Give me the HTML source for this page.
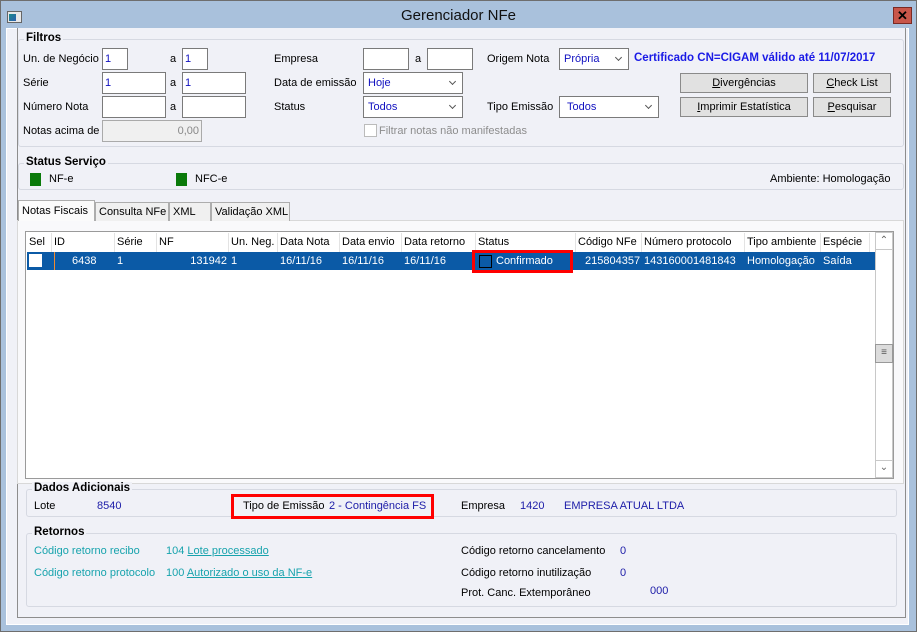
<!DOCTYPE html>
<html><head><meta charset="utf-8"><style>
*{box-sizing:border-box;margin:0;padding:0}
body{width:917px;height:632px;overflow:hidden;background:#6e6e6e;font-family:"Liberation Sans",Tahoma,sans-serif;font-size:11px;color:#000;position:relative}
div{white-space:nowrap}
.a{position:absolute}
.win{position:absolute;left:1px;top:1px;width:915px;height:630px;background:#a9c1dc}
.body{position:absolute;left:6px;top:28px;width:903px;height:597px;background:#f0f1f7;border:1px solid #fff}
.frame{position:absolute;left:17px;top:28px;width:889px;height:590px;border:1px solid #8d8d8d;border-top:none;background:#f0f1f7}
.grp{position:absolute;border:1px solid #d6d9e2;border-radius:3px}
.gt{position:absolute;font-weight:bold;background:#f0f1f7;padding:0 2px;font-size:11.5px}
.in{position:absolute;background:#fff;border:1px solid #7a7a7a;height:22px;color:#1010c0;padding:0 2px;line-height:20px}
.sel{position:absolute;background:#fff;border:1px solid #7a7a7a;height:22px;color:#1010c0;padding:0 4px;line-height:20px}
.sel:after{content:"";position:absolute;right:7px;top:6px;width:4px;height:4px;border-right:1.5px solid #555;border-bottom:1.5px solid #555;transform:rotate(45deg)}
.btn{position:absolute;background:#e1e1e1;border:1px solid #8a8a8a;height:20px;text-align:center;line-height:18px}
.tab{position:absolute;border:1px solid #adadad;border-bottom:none;background:#f0f0f0;height:19px;padding:0 3px;line-height:18px;overflow:hidden}
.hd{position:absolute;top:233px;height:19px;border-right:1px solid #e3e3e3;padding:0 2px;line-height:18px;background:#fff;overflow:hidden}
.rw{position:absolute;top:252px;height:18px;color:#fff;padding:0 2px;line-height:18px}
.teal{color:#17a3ad}
.blu{color:#1c1ca8}
</style></head><body>
<div class="win">
 <div class="a" style="left:6px;top:10px;width:15px;height:12px;background:#e8e8e8;border:1px solid #666"><div style="position:absolute;left:1px;top:2px;width:7px;height:7px;background:linear-gradient(135deg,#1a8a8a,#3060b0)"></div></div>
 <div class="a" style="left:0;width:915px;top:6px;text-align:center;font-size:15px;color:#111">Gerenciador NFe</div>
 <div class="a" style="left:892px;top:6px;width:19px;height:17px;background:#c8564a;border:1px solid #7a2a24;color:#000;font-weight:bold;font-size:13px;text-align:center;line-height:15px">✕</div>
</div>
<div class="body"></div>
<div class="frame"></div>

<div class="grp" style="left:18px;top:39px;width:886px;height:108px"></div>
<div class="gt" style="left:24px;top:32px">Filtros</div>
<div class="a" style="left:23px;top:53px">Un. de Negócio</div>
<div class="in" style="left:102px;top:48px;width:26px">1</div>
<div class="a" style="left:170px;top:53px">a</div>
<div class="in" style="left:182px;top:48px;width:26px">1</div>
<div class="a" style="left:23px;top:77px">Série</div>
<div class="in" style="left:102px;top:72px;width:64px">1</div>
<div class="a" style="left:170px;top:77px">a</div>
<div class="in" style="left:182px;top:72px;width:64px">1</div>
<div class="a" style="left:23px;top:101px">Número Nota</div>
<div class="in" style="left:102px;top:96px;width:64px"></div>
<div class="a" style="left:170px;top:101px">a</div>
<div class="in" style="left:182px;top:96px;width:64px"></div>
<div class="a" style="left:23px;top:125px">Notas acima de</div>
<div class="in" style="left:102px;top:120px;width:100px;background:#f0f0f0;border-color:#aaa;color:#888;text-align:right">0,00</div>
<div class="a" style="left:274px;top:53px">Empresa</div>
<div class="in" style="left:363px;top:48px;width:46px"></div>
<div class="a" style="left:415px;top:53px">a</div>
<div class="in" style="left:427px;top:48px;width:46px"></div>
<div class="a" style="left:274px;top:77px">Data de emissão</div>
<div class="sel" style="left:363px;top:72px;width:100px">Hoje</div>
<div class="a" style="left:274px;top:101px">Status</div>
<div class="sel" style="left:363px;top:96px;width:100px">Todos</div>
<div class="a" style="left:364px;top:124px;width:13px;height:13px;border:1px solid #bbb;background:#fff"></div>
<div class="a" style="left:379px;top:125px;color:#8d8d8d">Filtrar notas não manifestadas</div>
<div class="a" style="left:487px;top:53px">Origem Nota</div>
<div class="sel" style="left:559px;top:48px;width:70px">Própria</div>
<div class="a" style="left:634px;top:52px;font-weight:bold;color:#1a1ae6;font-size:11.5px">Certificado CN=CIGAM válido até 11/07/2017</div>
<div class="a" style="left:487px;top:101px">Tipo Emissão</div>
<div class="sel" style="left:559px;top:96px;width:100px">&nbsp;Todos</div>
<div class="btn" style="left:680px;top:73px;width:128px"><u>D</u>ivergências</div>
<div class="btn" style="left:813px;top:73px;width:78px"><u>C</u>heck List</div>
<div class="btn" style="left:680px;top:97px;width:128px"><u>I</u>mprimir Estatística</div>
<div class="btn" style="left:813px;top:97px;width:78px"><u>P</u>esquisar</div>

<div class="grp" style="left:18px;top:163px;width:886px;height:27px"></div>
<div class="gt" style="left:24px;top:156px">Status Serviço</div>
<div class="a" style="left:30px;top:173px;width:11px;height:13px;background:#0a7a0a"></div>
<div class="a" style="left:49px;top:173px">NF-e</div>
<div class="a" style="left:176px;top:173px;width:11px;height:13px;background:#0a7a0a"></div>
<div class="a" style="left:195px;top:173px">NFC-e</div>
<div class="a" style="left:770px;top:173px">Ambiente: Homologação</div>

<div class="a" style="left:17px;top:220px;width:887px;height:264px;background:#f9f9fb;border:1px solid #d8d8d8"></div>
<div class="tab" style="left:18px;top:200px;width:77px;height:21px;background:#fbfbfb;line-height:20px">Notas Fiscais</div>
<div class="tab" style="left:95px;top:202px;width:74px">Consulta NFe</div>
<div class="tab" style="left:169px;top:202px;width:42px">XML</div>
<div class="tab" style="left:211px;top:202px;width:79px">Validação XML</div>

<div class="a" style="left:25px;top:231px;width:869px;height:248px;background:#fff;border:1px solid #9a9a9a"></div>
<div class="hd" style="left:27px;width:25px">Sel</div>
<div class="hd" style="left:52px;width:63px">ID</div>
<div class="hd" style="left:115px;width:42px">Série</div>
<div class="hd" style="left:157px;width:72px">NF</div>
<div class="hd" style="left:229px;width:49px">Un. Neg.</div>
<div class="hd" style="left:278px;width:62px">Data Nota</div>
<div class="hd" style="left:340px;width:62px">Data envio</div>
<div class="hd" style="left:402px;width:74px">Data retorno</div>
<div class="hd" style="left:476px;width:100px">Status</div>
<div class="hd" style="left:576px;width:66px">Código NFe</div>
<div class="hd" style="left:642px;width:103px">Número protocolo</div>
<div class="hd" style="left:745px;width:76px">Tipo ambiente</div>
<div class="hd" style="left:821px;width:49px">Espécie</div>
<div class="a" style="left:27px;top:252px;width:848px;height:18px;background:#0b5aa6"></div>
<div class="a" style="left:29px;top:254px;width:13px;height:13px;background:#fff"></div>
<div class="a" style="left:54px;top:252px;width:1px;height:18px;background:#f08a30"></div>
<div class="rw" style="left:70px">6438</div>
<div class="rw" style="left:115px">1</div>
<div class="rw" style="left:157px;width:72px;text-align:right">131942</div>
<div class="rw" style="left:229px">1</div>
<div class="rw" style="left:278px">16/11/16</div>
<div class="rw" style="left:340px">16/11/16</div>
<div class="rw" style="left:402px">16/11/16</div>
<div class="a" style="left:479px;top:255px;width:13px;height:13px;border:1px solid #000"></div>
<div class="rw" style="left:494px">Confirmado</div>
<div class="rw" style="left:583px">215804357</div>
<div class="rw" style="left:642px">143160001481843</div>
<div class="rw" style="left:745px">Homologação</div>
<div class="rw" style="left:821px">Saída</div>
<div class="a" style="left:472px;top:250px;width:101px;height:23px;border:3px solid #ff0000"></div>
<div class="a" style="left:875px;top:232px;width:18px;height:246px;border:1px solid #c8c8c8;background:#fff"></div>
<div class="a" style="left:875px;top:232px;width:18px;height:18px;border:1px solid #c8c8c8;text-align:center;color:#666;font-size:10px;line-height:16px">&#8963;</div>
<div class="a" style="left:875px;top:460px;width:18px;height:18px;border:1px solid #c8c8c8;text-align:center;color:#666;font-size:10px;line-height:14px">&#8964;</div>
<div class="a" style="left:875px;top:344px;width:18px;height:19px;border:1px solid #999;background:#dcdcdc;text-align:center;color:#555;font-size:10px;line-height:16px">≡</div>

<div class="grp" style="left:26px;top:489px;width:871px;height:28px"></div>
<div class="gt" style="left:32px;top:482px">Dados Adicionais</div>
<div class="a" style="left:34px;top:500px">Lote</div>
<div class="a blu" style="left:97px;top:500px">8540</div>
<div class="a" style="left:243px;top:500px">Tipo de Emissão</div>
<div class="a blu" style="left:329px;top:500px">2 - Contingência FS</div>
<div class="a" style="left:231px;top:494px;width:203px;height:25px;border:3px solid #ff0000"></div>
<div class="a" style="left:461px;top:500px">Empresa</div>
<div class="a blu" style="left:520px;top:500px">1420</div>
<div class="a blu" style="left:564px;top:500px">EMPRESA ATUAL LTDA</div>

<div class="grp" style="left:26px;top:533px;width:871px;height:74px"></div>
<div class="gt" style="left:32px;top:526px">Retornos</div>
<div class="a teal" style="left:34px;top:545px">Código retorno recibo</div>
<div class="a teal" style="left:166px;top:545px">104 <u>Lote processado</u></div>
<div class="a teal" style="left:34px;top:567px">Código retorno protocolo</div>
<div class="a teal" style="left:166px;top:567px">100 <u>Autorizado o uso da NF-e</u></div>
<div class="a" style="left:461px;top:545px">Código retorno cancelamento</div>
<div class="a blu" style="left:620px;top:545px">0</div>
<div class="a" style="left:461px;top:567px">Código retorno inutilização</div>
<div class="a blu" style="left:620px;top:567px">0</div>
<div class="a" style="left:461px;top:587px">Prot. Canc. Extemporâneo</div>
<div class="a blu" style="left:650px;top:585px">000</div>
</body></html>
